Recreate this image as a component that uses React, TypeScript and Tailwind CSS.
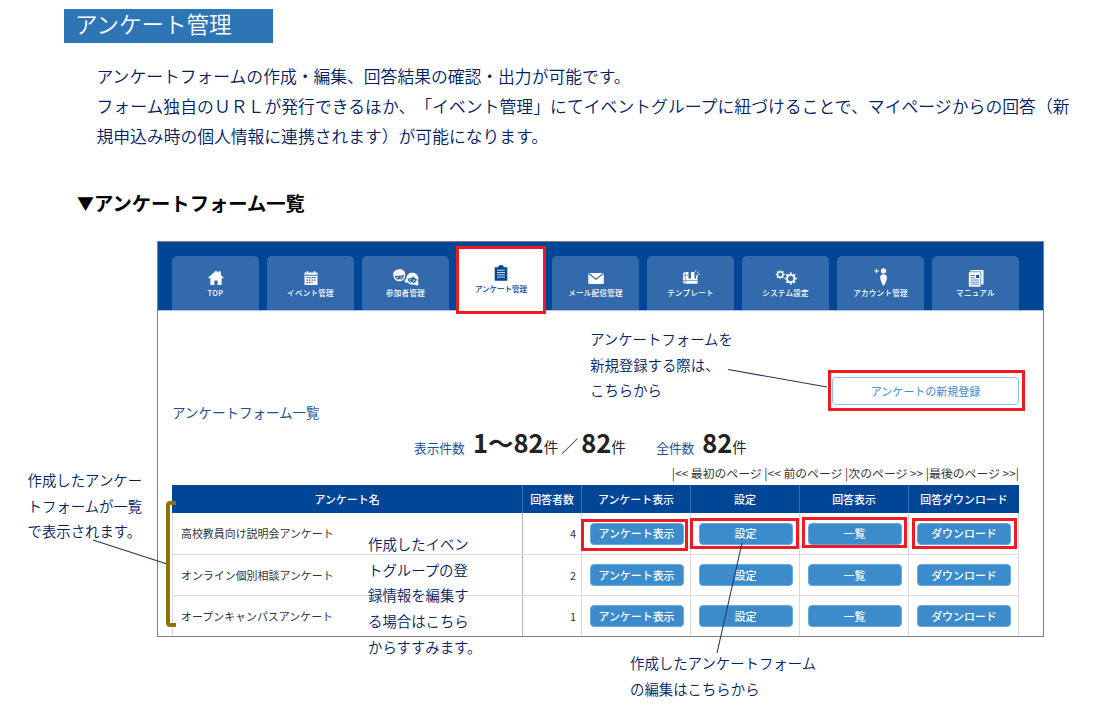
import type { ReactNode } from 'react';

const tabs = [
  { id: 'top', label: 'TOP' },
  { id: 'event', label: 'イベント管理' },
  { id: 'member', label: '参加者管理' },
  { id: 'survey', label: 'アンケート管理' },
  { id: 'mail', label: 'メール配信管理' },
  { id: 'template', label: 'テンプレート' },
  { id: 'system', label: 'システム設定' },
  { id: 'account', label: 'アカウント管理' },
  { id: 'manual', label: 'マニュアル' },
];

const surveys = [
  { name: '高校教員向け説明会アンケート', count: 4 },
  { name: 'オンライン個別相談アンケート', count: 2 },
  { name: 'オープンキャンパスアンケート', count: 1 },
];

const actions = ['アンケート表示', '設定', '一覧', 'ダウンロード'];

function Gear({ x, y, r }: { x: number; y: number; r: number }) {
  return (
    <g transform={`translate(${x} ${y})`} fill="none" stroke="currentColor">
      <circle r={r} strokeWidth={r * 0.5} />
      {[0, 45, 90, 135, 180, 225, 270, 315].map((deg) => (
        <path key={deg} d={`M0 ${-r * 1.1}V${-r * 1.65}`} strokeWidth={r * 0.5} transform={`rotate(${deg})`} />
      ))}
    </g>
  );
}

function TabIcon({ id }: { id: string }) {
  const icons: Record<string, ReactNode> = {
    top: (
      <path d="M15 1.5 7.4 8.6l1 1.1 1-.9V16h4v-4.6h3.2V16h4V8.8l1 .9 1-1.1-2.8-2.6V2.2h-2.2v1.6z" fill="currentColor" />
    ),
    event: (
      <>
        <path d="M8.5 3.5h13V16h-13z" fill="currentColor" />
        <path d="M11.5 2v2.5M18.5 2v2.5" stroke="currentColor" strokeWidth="1.5" />
        <path d="M8.5 6.2h13" stroke="#336aab" strokeWidth="1" />
        <path d="M10.5 8.7h9M10.5 11.2h9M10.5 13.7h6" stroke="#336aab" strokeWidth="1.3" strokeDasharray="1.5 1" />
      </>
    ),
    member: (
      <>
        <circle cx="8.3" cy="6.5" r="5.2" fill="#336aab" stroke="currentColor" strokeWidth="1.3" />
        <path d="M2.2 6.600C1.400-1.200 14.200-1.700 14.300 5.200c-3.500 1.400-8 2.100-12.100 1.400z" fill="currentColor" />
        <path d="M5.500 8.300H7M9.500 8.200H11M6.500 10c1 .9 2.400.9 3.400 0" stroke="currentColor" fill="none" strokeWidth="0.900" />
        <path d="M15.600 9.500l-1.800 3 2.700 1M26.500 11.500l.5 4.500-3.500-.5" fill="currentColor" stroke="currentColor" strokeWidth="1" />
        <circle cx="21.300" cy="9.800" r="5.200" fill="#336aab" stroke="currentColor" strokeWidth="1.300" />
        <path d="M15.500 9.300c-.200-7.500 12.500-7.800 11.900 1.300-2-.4-3.700-1.500-4.700-3.200-1.700 1.300-4.300 2.300-7.200 1.900z" fill="currentColor" />
        <path d="M18.300 10.800h1.500M22.300 11.300h1.500M19.200 12.700c1 .9 2.200 1 3.200.3" stroke="currentColor" fill="none" strokeWidth="0.900" />
      </>
    ),
    survey: (
      <>
        <path d="M8.700 3.200h3.500c.2-3 5.400-3 5.600 0h3.500v13.600H8.700z" fill="currentColor" />
        <path d="M11 6.200h8M11 8.500h8M11 10.800h8M11 13.100h8" stroke="white" strokeWidth="0.8" />
      </>
    ),
    mail: (
      <>
        <rect x="7.3" y="4" width="15.5" height="11" rx="0.8" fill="currentColor" />
        <path d="m7.800 4.500 7.200 5.800 7.300-5.800" stroke="#336aab" fill="none" strokeWidth="1.1" />
      </>
    ),
    template: (
      <>
        <path d="M7 4.200 9 3h3.500v6.500H15V3h3.500v6.500H20V6h1.500v8.800H9L7 13.500z" fill="currentColor" />
        <path d="M9.200 3.500v11M7 6.300h5.500M7 11.500h2.200M9.200 11.500h12" stroke="#336aab" strokeWidth="0.6" />
        <path d="m19.500 3 .5-2M21 4.200l1.800-1.700M21.700 5.500l2-.3" stroke="currentColor" strokeWidth="0.8" />
      </>
    ),
    system: (
      <>
        <Gear x={9.3} y={5.5} r={2.7} />
        <Gear x={19.7} y={9.5} r={3.7} />
      </>
    ),
    account: (
      <>
        <circle cx="17.5" cy="1.8" r="2.6" fill="currentColor" />
        <path d="M14.200 8.500c-.3-4.400 7-4.400 6.700 0-.1 2.500-1.200 4.300-2.100 7-.4 1.200-2 1.200-2.400 0-1-2.700-2.100-4.500-2.200-7z" fill="currentColor" />
        <path d="M10.500-.3v4.600M8.200 2h4.600" stroke="currentColor" strokeWidth="1.1" />
      </>
    ),
    manual: (
      <>
        <path d="M9.5 1h13v14.500h-13z" fill="currentColor" />
        <path d="M7.500 2.800h12.300v15.200H7.500z" fill="currentColor" stroke="#336aab" strokeWidth="0.7" />
        <path d="M9.500 6.500h4.500M9.500 8.800h4.500M9.500 11h8.500M9.500 13.200h8.500M9.500 15.200h8.500" stroke="#336aab" strokeWidth="0.8" />
        <path d="M15.200 6h2.800v3h-2.800z" fill="#004696" />
      </>
    ),
  };
  return (
    <svg width="30" height="18" viewBox="0 0 30 18" className="overflow-visible">
      {icons[id]}
    </svg>
  );
}

function Note({ lines, className }: { lines: string[]; className: string }) {
  return (
    <div className={`absolute text-[14.4px] leading-[25.7px] font-[350] whitespace-nowrap text-[#002060] [text-spacing-trim:space-all] ${className}`}>
      {lines.map((line) => (
        <p key={line}>{line}</p>
      ))}
    </div>
  );
}

function SurveyTable() {
  const head = 'flex items-center justify-center border-r border-[#3a6dae] last:border-r-0';
  const cell = 'flex items-center border-r border-[#d9d9d9]';
  const cols = 'grid grid-cols-[351px_59px_109px_109px_109px_110px]';
  return (
    <div className="w-[847px] text-[10.95px] leading-none">
      <div className={`${cols} h-7 bg-[#004696] font-medium text-white`}>
        {['アンケート名', '回答者数', 'アンケート表示', '設定', '回答表示', '回答ダウンロード'].map((h) => (
          <div key={h} className={head}>{h}</div>
        ))}
      </div>
      {surveys.map((survey) => (
        <div key={survey.name} className={`${cols} h-[41px] border-b border-[#d9d9d9] text-[#333] nth-[2]:h-[42px]`}>
          <div className="flex items-center border-x border-[#b5b5b5] border-l-[#d9d9d9] pl-2">{survey.name}</div>
          <div className={`${cell} justify-end pr-[5px]`}>{survey.count}</div>
          {actions.map((action) => (
            <div key={action} className={`${cell} justify-center pl-px`}>
              <button className="h-[22px] w-[94px] rounded border border-[#66a7dc] bg-[#3c8ccb] font-medium text-white">
                {action}
              </button>
            </div>
          ))}
        </div>
      ))}
    </div>
  );
}

export default function App() {
  return (
    <div className="relative h-[717px] w-[1119px] overflow-hidden bg-white font-['Noto_Sans_CJK_JP',sans-serif]">
      <header className="ml-16 pt-[9px]">
        <h1 className="h-[34px] w-[209px] bg-[#2e75b6] pl-[11px] text-[22.5px] leading-[28px] font-[350] text-white">アンケート管理</h1>
      </header>

      <div className="ml-[96.5px] pt-[18px] text-[16.8px] leading-[30px] font-[350] whitespace-nowrap text-[#002060] [text-spacing-trim:space-all]">
        <p>アンケートフォームの作成・編集、回答結果の確認・出力が可能です。</p>
        <p className="tracking-[0.06px]">フォーム独自のＵＲＬが発行できるほか、「イベント管理」にてイベントグループに紐づけることで、マイページからの回答（新</p>
        <p>規申込み時の個人情報に連携されます）が可能になります。</p>
      </div>

      <h2 className="mt-[37px] ml-[77px] flex h-[30px] items-center text-[19.3px] font-bold text-black">
        <span className="w-[17px] text-[17px]">▼</span>
        アンケートフォーム一覧
      </h2>

      {/* Admin screen */}
      <main className="mt-[23px] ml-[157px] h-[396px] w-[887px] overflow-hidden border border-[#7f7f7f]">
        <nav className="flex h-[69px] gap-2 border-b border-[#a9c3e0] bg-[#004696] pt-3.5 pl-3.5">
          {tabs.map((tab) =>
            tab.id === 'survey' ? (
              <div key={tab.id} className="-mt-2.5 -mr-0.5 -ml-px flex h-[68px] w-[90px] shrink-0 flex-col items-center border-[3px] border-[#ed1c24] bg-white pt-[15px] text-[#004696]">
                <TabIcon id={tab.id} />
                <span className="mt-px text-[7.5px] leading-3 font-medium whitespace-nowrap">{tab.label}</span>
              </div>
            ) : (
              <div key={tab.id} className="flex w-[87px] shrink-0 flex-col items-center rounded-t-[5px] bg-[#336aab] pt-[13px] text-white">
                <TabIcon id={tab.id} />
                <span className="text-[7.5px] leading-3 font-medium tracking-[0.3px] whitespace-nowrap">{tab.label}</span>
              </div>
            ),
          )}
        </nav>

        <section className="w-[861px] pl-3.5">
          <div className="flex justify-end pt-[66px]">
            <button className="h-7 w-[187px] rounded border border-[#8bbfe6] bg-white text-[11px] text-[#3c8ccb]">
              アンケートの新規登録
            </button>
          </div>
          <h3 className="-mt-[3px] h-[21px] text-[13.5px] leading-5 text-[#1d5091]">アンケートフォーム一覧</h3>

          <div className="flex h-[38px] items-baseline pt-[3px] pl-[242px] whitespace-nowrap text-[#222]">
            <span className="w-[59px] text-[12.7px] text-[#1d5091]">表示件数</span>
            <span className="text-[25.5px] leading-8 font-bold">1〜82</span>
            <span className="text-[14.5px]">件</span>
            <span className="mx-[3px] text-[17px]">／</span>
            <span className="text-[25.5px] leading-8 font-bold">82</span>
            <span className="w-[45px] text-[14.5px]">件</span>
            <span className="w-[46px] text-[12.7px] text-[#1d5091]">全件数</span>
            <span className="text-[25.5px] leading-8 font-bold">82</span>
            <span className="text-[14.5px]">件</span>
          </div>

          <div className="flex h-6 items-center justify-end text-[11.87px] whitespace-nowrap text-[#333]">
            |&lt;&lt; 最初のページ |&lt;&lt; 前のページ |次のページ &gt;&gt; |最後のページ &gt;&gt;|
          </div>
          <SurveyTable />
        </section>
      </main>

      {/* Highlight frames */}
      <div className="absolute top-[370px] left-[828px] h-[41px] w-[197px] border-[3px] border-[#ed1c24]" />
      <div className="absolute top-[519px] left-[581px] h-8 w-[107px] border-[3px] border-[#ed1c24]" />
      <div className="absolute top-[518px] left-[690px] h-[31px] w-[109px] border-[3px] border-[#ed1c24]" />
      <div className="absolute top-[517px] left-[802px] h-[31px] w-[105px] border-[3px] border-[#ed1c24]" />
      <div className="absolute top-[518px] left-[912px] h-[31px] w-[105px] border-[3px] border-[#ed1c24]" />

      {/* Leader lines and bracket */}
      <svg className="absolute inset-0" width="1119" height="717" fill="none">
        <path d="M93 540 167 564M728 369.500 827 387M742 543 717 653" stroke="#1f3864" strokeWidth="1.1" />
        <path d="M176 503h-6q-2 0-2 2v118q0 2 2 2h6" stroke="#937000" strokeWidth="4" />
      </svg>

      <Note className="top-[326px] left-[590px]" lines={['アンケートフォームを', '新規登録する際は、', 'こちらから']} />
      <Note className="top-[467px] left-[27.5px]" lines={['作成したアンケー', 'トフォームが一覧', 'で表示されます。']} />
      <Note className="top-[531px] left-[368px]" lines={['作成したイベン', 'トグループの登', '録情報を編集す', 'る場合はこちら', 'からすすみます。']} />
      <Note className="top-[650px] left-[630px]" lines={['作成したアンケートフォーム', 'の編集はこちらから']} />
    </div>
  );
}
